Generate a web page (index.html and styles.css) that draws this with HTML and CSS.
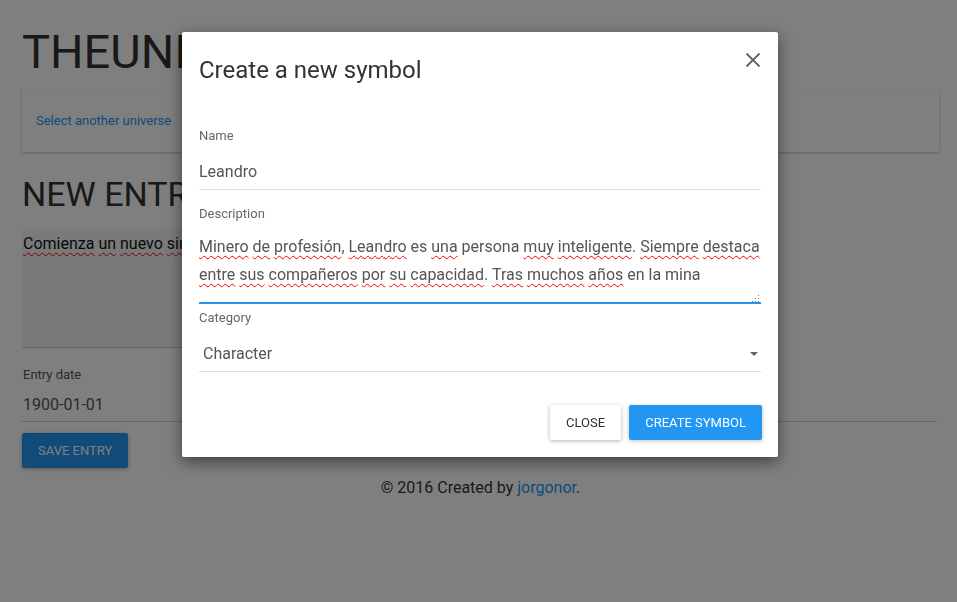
FILE: index.html
```html
<!DOCTYPE html>
<html lang="es">
<head>
<meta charset="utf-8">
<title>TheUniverse - New entry</title>
<link rel="stylesheet" href="styles.css">
</head>
<body>
<div class="page">
  <h1 class="brand">THEUNIVERSE</h1>
  <div class="card"><a class="link" href="#">Select another universe</a></div>
  <h2 class="section">NEW ENTRY</h2>
  <div class="entry-text"><span class="sp">Comienza</span> <span class="sp">un</span> <span class="sp">nuevo</span> <span class="sp">simbolo</span></div>
  <div class="date-field">
    <div class="page-label">Entry date</div>
    <div class="date-value">1900-01-01</div>
  </div>
  <button class="btn-save">Save entry</button>
  <footer class="footer">© 2016 Created by <a class="link-foot" href="#">jorgonor</a>.</footer>
</div>

<div class="backdrop"></div>

<div class="modal">
  <div class="modal-header">
    <h3 class="modal-title">Create a new symbol</h3>
    <span class="close-icon"><svg width="16" height="16" viewBox="0 0 16 16"><path d="M1.5 1.5 L14.5 14.5 M14.5 1.5 L1.5 14.5" stroke="#5f6368" stroke-width="1.8" fill="none"/></svg></span>
  </div>
  <div class="field field-name">
    <div class="label">Name</div>
    <div class="input">Leandro</div>
  </div>
  <div class="field field-desc">
    <div class="label">Description</div>
    <div class="textarea"><span class="sp">Minero</span> <span class="sp">de</span> <span class="sp">profesión</span>, <span class="sp">Leandro</span> es <span class="sp">una</span> persona <span class="sp">muy</span> <span class="sp">inteligente</span>. <span class="sp">Siempre</span> <span class="sp">destaca</span> <span class="sp">entre</span> <span class="sp">sus</span> <span class="sp">compañeros</span> <span class="sp">por</span> <span class="sp">su</span> <span class="sp">capacidad</span>. <span class="sp">Tras</span> <span class="sp">muchos</span> <span class="sp">años</span> en la mina<span class="grip"><svg width="8" height="8" viewBox="0 0 8 8"><rect x="6" y="0" width="1" height="1" fill="#777"/><rect x="3" y="3" width="1" height="1" fill="#777"/><rect x="6" y="3" width="1" height="1" fill="#777"/><rect x="0" y="6" width="1" height="1" fill="#777"/><rect x="3" y="6" width="1" height="1" fill="#777"/><rect x="6" y="6" width="1" height="1" fill="#777"/></svg></span></div>
  </div>
  <div class="field field-cat">
    <div class="label">Category</div>
    <div class="select"><span class="select-text">Character</span><span class="caret"></span></div>
  </div>
  <div class="actions">
    <button class="btn btn-close">Close</button>
    <button class="btn btn-primary">Create symbol</button>
  </div>
</div>
</body>
</html>
```
FILE: styles.css
```css
html, body {
  margin: 0;
  padding: 0;
  height: 100%;
}
body {
  font-family: Roboto, "Liberation Sans", sans-serif;
  background: #ffffff;
  color: #333333;
}
.page {
  padding: 0 18px 0 22px;
}
.brand {
  margin: 26px 0 0;
  font-size: 47px;
  font-weight: 400;
  line-height: 52px;
  color: #333333;
}
.card {
  margin-top: 11px;
  background: #ffffff;
  border-radius: 3px;
  box-shadow: 0 1px 3px rgba(0, 0, 0, 0.25);
  padding: 22px 14px;
}
.link {
  display: block;
  font-size: 13px;
  line-height: 19px;
  color: #2196f3;
  text-decoration: none;
}
.section {
  margin: 22px 0 0;
  font-size: 34px;
  font-weight: 400;
  line-height: 40px;
  color: #333333;
}
.sp {
  text-decoration: underline wavy #ff0000;
  text-decoration-thickness: 1px;
  text-underline-offset: 3px;
  text-decoration-skip-ink: none;
}
.entry-text {
  margin-top: 14px;
  width: 600px;
  height: 115px;
  padding: 4px 0 0 1px;
  background: #f5f5f5;
  border-bottom: 1px solid #cccccc;
  font-size: 16px;
  line-height: 24px;
  color: #111111;
}
.date-field {
  margin-top: 19px;
  margin-right: 2px;
  border-bottom: 1px solid #cccccc;
  padding-bottom: 4px;
}
.page-label {
  font-size: 13px;
  line-height: 16px;
  color: #555555;
  padding-left: 1px;
}
.date-value {
  margin-top: 10px;
  font-size: 16px;
  line-height: 24px;
  color: #555555;
  padding-left: 1px;
}
.btn-save {
  display: block;
  margin-top: 11px;
  height: 35px;
  padding: 0 16px;
  border: none;
  border-radius: 2px;
  background: #2196f3;
  color: #ffffff;
  font-family: Roboto, "Liberation Sans", sans-serif;
  font-size: 13px;
  text-transform: uppercase;
  box-shadow: 0 1px 4px rgba(0, 0, 0, 0.3);
}
.footer {
  margin-top: 8px;
  text-align: center;
  font-size: 16px;
  line-height: 24px;
  color: #333333;
}
.link-foot {
  color: #2196f3;
  text-decoration: none;
}
.backdrop {
  position: fixed;
  inset: 0;
  background: rgba(0, 0, 0, 0.5);
}
.modal {
  position: absolute;
  left: 182px;
  top: 32px;
  width: 596px;
  box-sizing: border-box;
  background: #ffffff;
  border-radius: 2px;
  box-shadow: 0 5px 15px rgba(0, 0, 0, 0.5);
  padding: 20px 17px 17px;
}
.modal-header {
  display: flex;
  justify-content: space-between;
  align-items: flex-start;
}
.modal-title {
  margin: 0;
  font-size: 24px;
  font-weight: 400;
  line-height: 36px;
  color: #333333;
}
.close-icon {
  display: block;
  width: 16px;
  height: 16px;
}
.close-icon svg {
  display: block;
}
.label {
  font-size: 13px;
  line-height: 16px;
  color: #666666;
}
.field-name {
  margin-top: 40px;
}
.input {
  margin-top: 16px;
  font-size: 16px;
  line-height: 24px;
  color: #555555;
  padding-bottom: 5px;
  border-bottom: 1px solid #dddddd;
}
.field-desc {
  margin-top: 16px;
}
.textarea {
  position: relative;
  margin-top: 11px;
  font-size: 16px;
  line-height: 28px;
  color: #555555;
  padding-bottom: 13px;
  border-bottom: 2px solid #2196f3;
}
.grip {
  position: absolute;
  right: 1px;
  bottom: -1px;
  width: 8px;
  height: 8px;
  line-height: 0;
}
.field-cat {
  margin-top: 6px;
}
.select {
  margin-top: 16px;
  display: flex;
  align-items: center;
  justify-content: space-between;
  padding-bottom: 5px;
  border-bottom: 1px solid #dddddd;
}
.select-text {
  font-size: 16px;
  line-height: 24px;
  color: #555555;
  padding-left: 4px;
}
.caret {
  width: 0;
  height: 0;
  margin-right: 3px;
  border-left: 4px solid transparent;
  border-right: 4px solid transparent;
  border-top: 4px solid #666666;
}
.actions {
  margin-top: 33px;
  display: flex;
  justify-content: flex-end;
  gap: 8px;
  margin-right: -1px;
}
.btn {
  height: 35px;
  padding: 0 16px;
  border: none;
  border-radius: 2px;
  font-family: Roboto, "Liberation Sans", sans-serif;
  font-size: 13px;
  text-transform: uppercase;
}
.btn-close {
  background: #ffffff;
  color: #333333;
  box-shadow: 0 1px 4px rgba(0, 0, 0, 0.3);
}
.btn-primary {
  background: #2196f3;
  color: #ffffff;
  box-shadow: 0 1px 4px rgba(0, 0, 0, 0.25);
}
```
